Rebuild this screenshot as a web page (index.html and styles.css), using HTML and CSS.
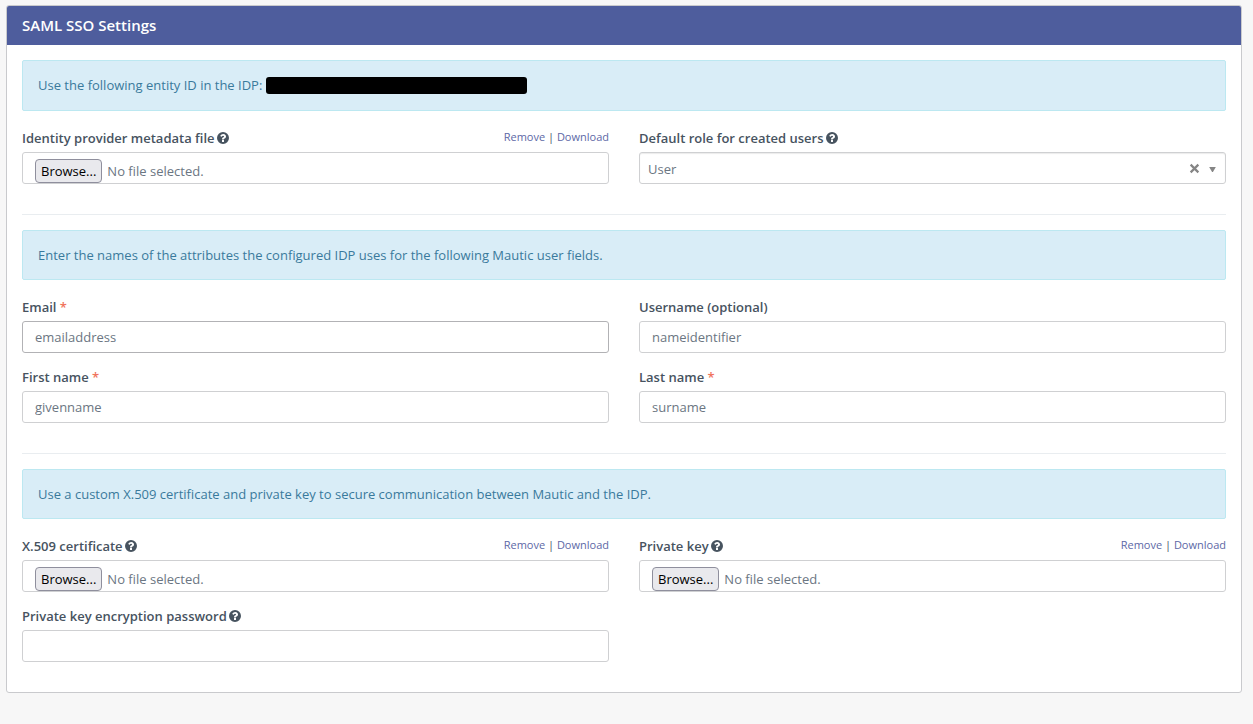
FILE: index.html
```html
<!DOCTYPE html>
<html lang="en">
<head>
<meta charset="utf-8">
<meta name="viewport" content="width=device-width, initial-scale=1">
<title>SAML SSO Settings</title>
<link rel="stylesheet" href="styles.css">
</head>
<body>
<svg class="sprite" aria-hidden="true">
  <symbol id="help" viewBox="0 0 1536 1536">
    <path fill-rule="evenodd" d="M768 0a768 768 0 1 1 0 1536a768 768 0 1 1 0-1536zM896 1248v-192q0-14-9-23t-23-9H672q-14 0-23 9t-9 23v192q0 14 9 23t23 9h192q14 0 23-9t9-23zM1152 576q0-88-55.500-163t-138.500-116t-170-41q-243 0-371 213q-15 24 8 42l132 100q7 6 19 6q16 0 25-12q53-68 86-92q34-24 86-24q48 0 85.500 26t37.500 59q0 38-20 61t-68 45q-63 28-115.500 86.500T640 892v36q0 14 9 23t23 9h192q14 0 23-9t9-23q0-19 21.500-49.500T972 829q32-18 49-28.500t46-35t44.500-48t28-60.500t12.500-81z"/>
  </symbol>
</svg>
<main class="panel">
  <header class="panel-heading"><h1 class="panel-title">SAML SSO Settings</h1></header>
  <form class="panel-body">
    <div class="alert">Use the following entity ID in the IDP: <span class="redacted"></span></div>
    <div class="row">
      <div class="form-group">
        <div class="label-row">
          <label for="metadata">Identity provider metadata file <svg class="help"><use href="#help"/></svg></label>
          <span class="actions"><a href="#">Remove</a> | <a href="#">Download</a></span>
        </div>
        <div class="form-control file-control">
          <button class="browse" type="button" tabindex="-1">Browse...</button>
          <span>No file selected.</span>
          <input class="file-input" type="file" id="metadata">
        </div>
      </div>
      <div class="form-group">
        <div class="label-row">
          <label for="role">Default role for created users <svg class="help"><use href="#help"/></svg></label>
        </div>
        <div class="select-wrap">
          <select class="form-control select" id="role"><option>User</option></select>
          <button class="clear" type="button" aria-label="Clear">
            <svg class="clear-icon" viewBox="0 0 10 10"><path d="M1.500 1.500L8.500 8.500M8.500 1.500L1.500 8.500"/></svg>
          </button>
          <svg class="caret" viewBox="0 0 8 6"><path d="M0 0H8L4.500 6H3.500z"/></svg>
        </div>
      </div>
    </div>
    <hr class="divider">
    <div class="alert">Enter the names of the attributes the configured IDP uses for the following Mautic user fields.</div>
    <div class="row">
      <div class="form-group">
        <div class="label-row"><label for="email">Email <span class="required">*</span></label></div>
        <input class="form-control hovered" type="text" id="email" value="emailaddress">
      </div>
      <div class="form-group">
        <div class="label-row"><label for="username">Username (optional)</label></div>
        <input class="form-control" type="text" id="username" value="nameidentifier">
      </div>
      <div class="form-group">
        <div class="label-row"><label for="firstname">First name <span class="required">*</span></label></div>
        <input class="form-control" type="text" id="firstname" value="givenname">
      </div>
      <div class="form-group">
        <div class="label-row"><label for="lastname">Last name <span class="required">*</span></label></div>
        <input class="form-control" type="text" id="lastname" value="surname">
      </div>
    </div>
    <hr class="divider">
    <div class="alert">Use a custom X.509 certificate and private key to secure communication between Mautic and the IDP.</div>
    <div class="row">
      <div class="form-group">
        <div class="label-row">
          <label for="certificate">X.509 certificate <svg class="help"><use href="#help"/></svg></label>
          <span class="actions"><a href="#">Remove</a> | <a href="#">Download</a></span>
        </div>
        <div class="form-control file-control">
          <button class="browse" type="button" tabindex="-1">Browse...</button>
          <span>No file selected.</span>
          <input class="file-input" type="file" id="certificate">
        </div>
      </div>
      <div class="form-group">
        <div class="label-row">
          <label for="privatekey">Private key <svg class="help"><use href="#help"/></svg></label>
          <span class="actions"><a href="#">Remove</a> | <a href="#">Download</a></span>
        </div>
        <div class="form-control file-control">
          <button class="browse" type="button" tabindex="-1">Browse...</button>
          <span>No file selected.</span>
          <input class="file-input" type="file" id="privatekey">
        </div>
      </div>
      <div class="form-group">
        <div class="label-row"><label for="password">Private key encryption password <svg class="help"><use href="#help"/></svg></label></div>
        <input class="form-control" type="password" id="password">
      </div>
    </div>
  </form>
</main>
</body>
</html>
```

FILE: styles.css
```css
* {
  box-sizing: border-box;
}

body {
  margin: 0;
  padding: 5px 11px 24px 6px;
  background: #f7f7f7;
  color: #47535f;
  font: 13px/18px "Open Sans", sans-serif;
}

.sprite {
  display: none;
}

.panel {
  border: 1px solid #c9cacd;
  border-radius: 3px;
  background: #fff;
}

.panel-heading {
  padding: 9px 15px 10px;
  border-radius: 2px 2px 0 0;
  background: #4e5d9d;
  color: #fff;
}

.panel-title {
  margin: 0;
  font-size: 15px;
  font-weight: 600;
  line-height: 20px;
}

.panel-body {
  padding: 15px;
}

.alert {
  margin-bottom: 18px;
  padding: 15px;
  border: 1px solid #bce8f1;
  border-radius: 2px;
  background: #d9edf7;
  color: #3a7a9c;
}

.redacted {
  display: inline-block;
  width: 261px;
  height: 17px;
  margin-bottom: 1px;
  border-radius: 3px;
  background: #000;
  vertical-align: -5px;
}

.row {
  display: grid;
  grid-template-columns: 1fr 1fr;
  column-gap: 30px;
}

.form-group {
  min-width: 0;
  margin-bottom: 15px;
}

.label-row {
  display: flex;
  justify-content: space-between;
  margin-bottom: 5px;
  font-weight: 600;
}

.help {
  width: 12px;
  height: 12px;
  margin-left: -1px;
  fill: #47535f;
  vertical-align: -1px;
}

.required {
  color: #f0735c;
}

.actions {
  font-size: 11px;
  font-weight: 400;
  line-height: 16px;
}

.actions a {
  color: #5d68a6;
  text-decoration: none;
}

.form-control {
  display: block;
  width: 100%;
  height: 32px;
  padding: 0 12px;
  border: 1px solid #cfd0d2;
  border-radius: 3px;
  background: #fff;
  color: #6b7682;
  font: inherit;
}

.hovered {
  border-color: #b2b2b5;
}

.file-control {
  position: relative;
  display: flex;
  align-items: flex-end;
  gap: 5px;
  line-height: 24px;
}

.browse {
  height: 24px;
  padding: 0 5px;
  border: 1px solid #8f8f9d;
  border-radius: 4px;
  background: #e9e9ed;
  color: #000;
  font: inherit;
  line-height: 22px;
}

.file-input {
  position: absolute;
  inset: 0;
  width: 100%;
  opacity: 0;
}

.select-wrap {
  position: relative;
}

.select {
  padding: 2px 8px 0;
  appearance: none;
  box-shadow: inset 0 1px 1px #ececec;
}

.clear {
  position: absolute;
  top: 10px;
  right: 25px;
  display: flex;
  padding: 1px;
  border: 0;
  background: none;
}

.clear-icon {
  width: 11px;
  height: 11px;
  stroke: #858585;
  stroke-width: 2;
}

.caret {
  position: absolute;
  top: 15px;
  right: 10px;
  width: 7px;
  height: 5px;
  fill: #858585;
  pointer-events: none;
}

.divider {
  height: 1px;
  margin: 15px 0;
  border: 0;
  background: #e9edf0;
}
```
